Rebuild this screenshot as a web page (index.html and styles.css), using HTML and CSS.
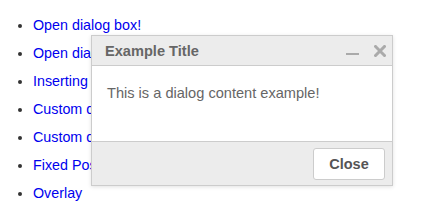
FILE: index.html
```html
<!DOCTYPE html>
<html lang="en">
<head>
  <meta charset="UTF-8">
  <title>Dialog examples</title>
  <link rel="stylesheet" href="styles.css">
</head>
<body>

<ul class="demo-list">
  <li><a href="#">Open dialog box!</a></li>
  <li><a href="#">Open dialog with buttons</a></li>
  <li><a href="#">Inserting content</a></li>
  <li><a href="#">Custom dialog title</a></li>
  <li><a href="#">Custom dialog size</a></li>
  <li><a href="#">Fixed Position</a></li>
  <li><a href="#">Overlay</a></li>
</ul>

<!-- dialog -->
<div class="dialog">
  <div class="dialog-header">
    <span class="dialog-title">Example Title</span>
    <span class="dialog-tools">
      <svg class="tool" width="13" height="12" viewBox="0 0 13 12"><rect x="0" y="8" width="13" height="2" fill="#aaa"/></svg>
      <svg class="tool" width="12" height="12" viewBox="0 0 12 12"><path d="M1.5 1.5 L10.5 10.5 M10.5 1.5 L1.5 10.5" stroke="#aaa" stroke-width="3" stroke-linecap="square"/></svg>
    </span>
  </div>
  <div class="dialog-body">This is a dialog content example!</div>
  <div class="dialog-footer">
    <button class="btn">Close</button>
  </div>
</div>

</body>
</html>
```

FILE: styles.css
```css
body {
  margin: 0;
  font-family: "Liberation Sans", Arial, sans-serif;
  font-size: 14px;
  background: #fff;
}
.demo-list {
  margin: 11px 0 0 0;
  padding-left: 33px;
}
.demo-list li {
  line-height: 28px;
  font-size: 14.3px;
  color: #333;
}
.demo-list a {
  color: #0000ee;
  text-decoration: none;
}
.dialog {
  position: absolute;
  left: 91px;
  top: 35px;
  width: 302px;
  box-sizing: border-box;
  border: 1px solid #ccc;
  background: #fff;
  box-shadow: 0 1px 4px rgba(0,0,0,0.12);
  color: #666;
}
.dialog-header {
  height: 29px;
  display: flex;
  align-items: center;
  justify-content: space-between;
  padding: 0 6px 0 13px;
  background: #ececec;
  border-bottom: 1px solid #ccc;
}
.dialog-title {
  font-weight: bold;
  font-size: 14.6px;
  color: #666;
}
.dialog-tools {
  display: flex;
  align-items: center;
  gap: 15px;
}
.tool {
  display: block;
}
.dialog-body {
  height: 75px;
  box-sizing: border-box;
  padding: 18px 15px 0 15px;
  font-size: 14.6px;
  line-height: 18px;
}
.dialog-footer {
  height: 44px;
  box-sizing: border-box;
  padding: 6px 7px 0 0;
  display: flex;
  justify-content: flex-end;
  background: #ececec;
  border-top: 1px solid #ccc;
}
.btn {
  width: 72px;
  height: 32px;
  font-family: inherit;
  font-size: 14.5px;
  font-weight: bold;
  color: #555;
  background: #fff;
  border: 1px solid #ccc;
  border-radius: 3px;
  cursor: pointer;
}
```
